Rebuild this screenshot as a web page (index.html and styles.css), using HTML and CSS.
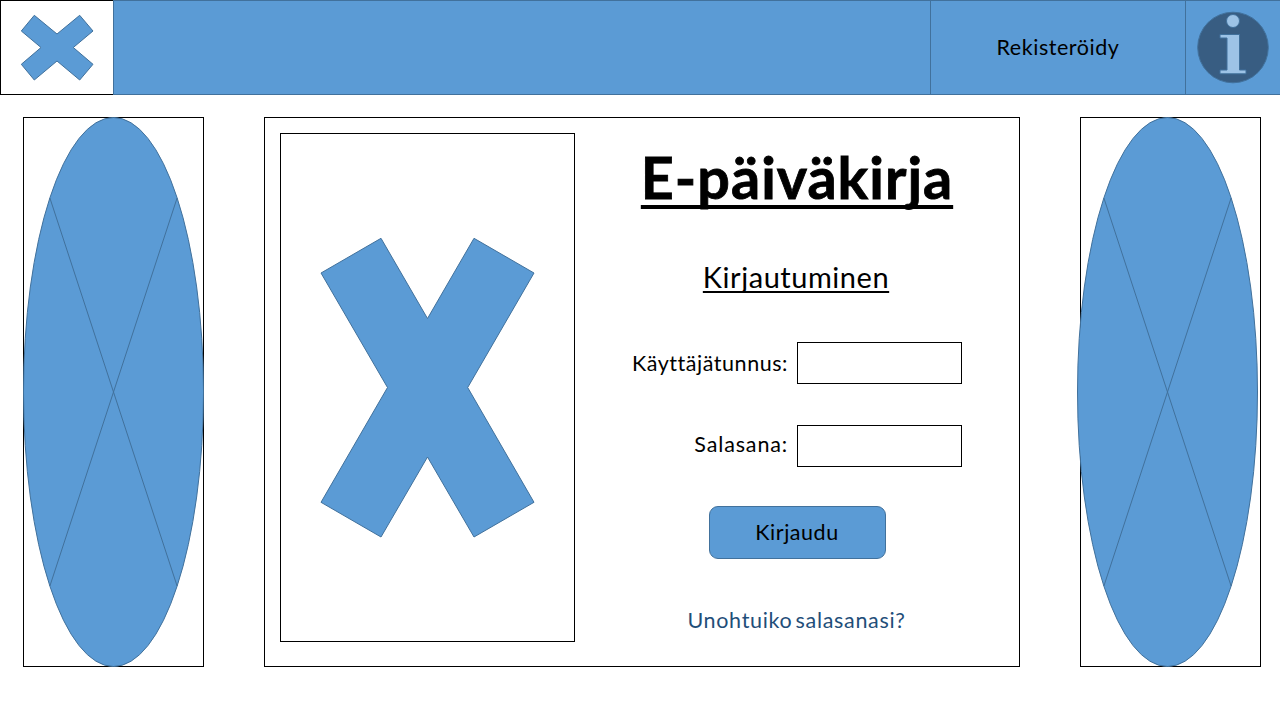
FILE: index.html
```html
<!DOCTYPE html>
<html lang="fi">
<head>
<meta charset="utf-8">
<title>E-päiväkirja</title>
<link rel="stylesheet" href="styles.css">
</head>
<body>
<header class="topbar">
  <div class="logo">
    <svg class="shape" width="112" height="93" viewBox="1 1 112 93"><path d="M21.3 31 34.3 15.3 57 34 79.7 15.3 93 31 73.3 47.5 93 64.3 79.7 80 57 61 34.3 80 21.3 64.3 41 47.5Z"/></svg>
  </div>
  <div class="bar"></div>
  <a class="register"><span>Rekisteröidy</span></a>
  <a class="info">
    <svg width="94" height="93" viewBox="1186 1 94 93">
      <circle class="info-disc" cx="1233" cy="47.5" r="35.3"/>
      <circle class="info-mark" cx="1233" cy="21" r="6.5"/>
      <path class="info-mark" d="M1220 34.5H1239.5V70H1246V73.8H1220V70H1227V38H1220Z"/>
    </svg>
  </a>
</header>
<main class="content">
  <aside class="side">
    <svg class="shape" width="181" height="550" viewBox="23 117 181 550"><ellipse cx="113.5" cy="392" rx="90" ry="274.5"/><path d="M49.9 198 177.1 586M177.1 198 49.9 586"/></svg>
  </aside>
  <section class="card">
    <div class="picture">
      <svg class="shape" width="293" height="507" viewBox="281 134 293 507"><path d="M321 273 381 238.3 427.5 318.5 474 238.3 534 273 467.7 387.5 534 502.3 474 537 427.5 457 381 537 321 502.3 387.5 387.5Z"/></svg>
    </div>
    <form class="login">
      <h1 class="title">E-päiväkirja</h1>
      <h2 class="subtitle">Kirjautuminen</h2>
      <div class="field"><label class="label user" for="user">Käyttäjätunnus:</label><input class="input" id="user" type="text"></div>
      <div class="field"><label class="label pass" for="pass">Salasana:</label><input class="input" id="pass" type="password"></div>
      <button class="submit" type="button">Kirjaudu</button>
      <a class="forgot">Unohtuiko salasanasi?</a>
    </form>
  </section>
  <aside class="side side-right">
    <svg class="shape" width="181" height="550" viewBox="23 117 181 550"><ellipse cx="113.5" cy="392" rx="90" ry="274.5"/><path d="M49.9 198 177.1 586M177.1 198 49.9 586"/></svg>
  </aside>
</main>
</body>
</html>
```
FILE: styles.css
```css
* { box-sizing: border-box; }
body {
  margin: 0;
  width: 1280px;
  height: 720px;
  overflow: hidden;
  background: #fff;
  color: #000;
  font: 21.5px/30px Lato, "Open Sans", sans-serif;
  letter-spacing: 0.54px;
}
svg { display: block; }
.shape { fill: #5b9bd5; stroke: #41719c; stroke-width: 1; overflow: visible; }
.topbar { display: flex; height: 95px; }
.logo { width: 113px; border: 1px solid #000; border-right: 0; }
.bar { width: 817px; background: #5b9bd5; border: 1px solid #41719c; border-right: 0; }
.register {
  width: 255px;
  display: flex;
  align-items: center;
  justify-content: center;
  padding-bottom: 2px;
  background: #5b9bd5;
  border: 1px solid #41719c;
  border-right: 0;
}
.info { width: 95px; background: #5b9bd5; border: 1px solid #41719c; border-right: 0; }
.info-disc { fill: #385d82; stroke: #41719c; }
.info-mark { fill: #9dc3e6; stroke: #41719c; }
.content { display: flex; gap: 60px; padding: 22px 19px 0 23px; }
.side { width: 181px; height: 550px; border: 1px solid #000; }
.side .shape { margin: -1px; }
.side-right .shape { margin-left: -4px; }
.card { width: 756px; height: 550px; display: flex; padding: 15px 0; border: 1px solid #000; }
.picture { width: 295px; height: 509px; margin-left: 15px; border: 1px solid #000; }
.login { width: 444px; display: flex; flex-direction: column; align-items: center; padding-top: 14px; }
.title {
  margin: 0;
  font-size: 57.5px;
  font-weight: 700;
  line-height: 60px;
  letter-spacing: 1px;
  -webkit-text-stroke: 0.8px #000;
  text-decoration: underline 4px;
  text-underline-offset: 6px;
  text-decoration-skip-ink: none;
}
.subtitle {
  margin: 54px 2px 49px 0;
  font-size: 29px;
  font-weight: 400;
  line-height: 32px;
  text-decoration: underline 2px;
  text-underline-offset: 3px;
  text-decoration-skip-ink: none;
}
.field { display: flex; align-self: stretch; height: 42px; margin-bottom: 41px; }
.label { width: 222px; padding: 6px 9px 0 0; text-align: right; }
.pass { padding-top: 4px; letter-spacing: 0.85px; }
.input { width: 165px; height: 42px; padding: 4px 8px; border: 1px solid #000; border-radius: 0; background: #fff; font: inherit; }
.submit {
  width: 177px;
  height: 53px;
  margin: -2px 0 0 1px;
  padding: 0 1px 2px 0;
  border: 1px solid #41719c;
  border-radius: 9px;
  background: #5b9bd5;
  color: #000;
  font: inherit;
  letter-spacing: inherit;
}
.forgot { margin: 46px 1px 0 0; color: #1f4e79; letter-spacing: 0.68px; word-spacing: -3px; }
```
